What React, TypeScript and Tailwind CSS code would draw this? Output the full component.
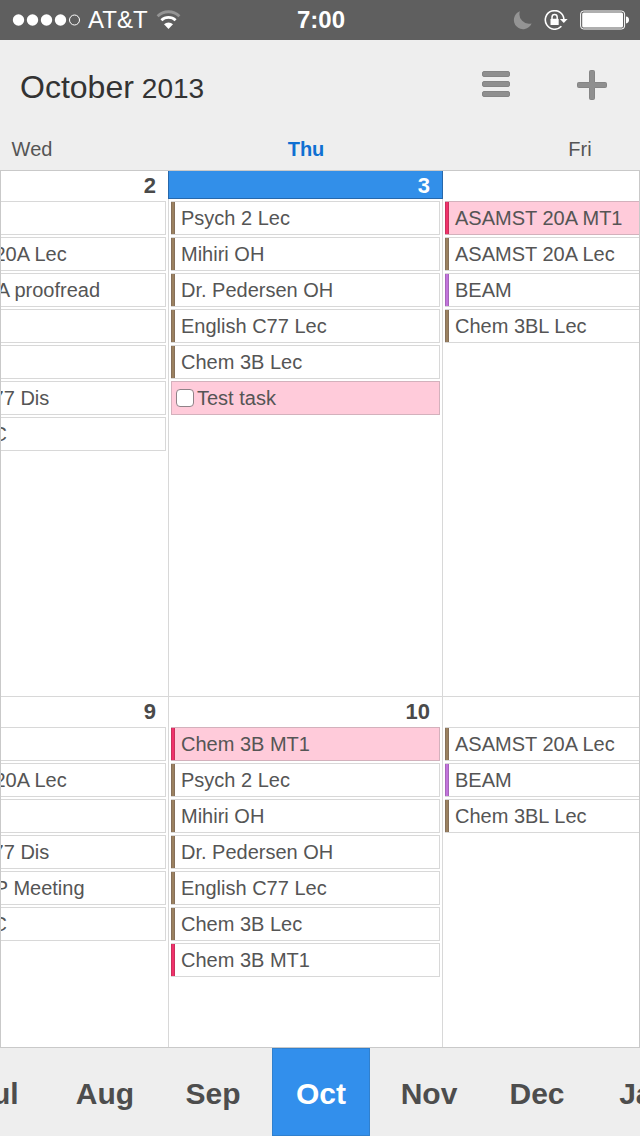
import { clsx } from "clsx";

type EventItem = {
  title?: string;
  color?: "brown" | "pink" | "purple";
  filled?: boolean;
  task?: boolean;
};

type Day = {
  date?: number;
  today?: boolean;
  events: EventItem[];
};

const DAY_NAMES = ["Wed", "Thu", "Fri"];
const MONTHS = ["Jul", "Aug", "Sep", "Oct", "Nov", "Dec", "Jan"];
const CURRENT_MONTH = "Oct";

// The outer days run past the screen edges, only the middle one is fully visible.
const COLUMNS = "grid grid-cols-[168fr_274fr_198fr]";
const ALIGN = ["justify-end", "justify-center", "justify-start"];

const FIRST_WEEK: Day[] = [
  {
    date: 2,
    events: [
      {},
      { title: "ASAMST 20A Lec" },
      { title: "Writing 20A proofread" },
      {},
      {},
      { title: "English C77 Dis" },
      { title: "English RC" },
    ],
  },
  {
    date: 3,
    today: true,
    events: [
      { title: "Psych 2 Lec" },
      { title: "Mihiri OH" },
      { title: "Dr. Pedersen OH" },
      { title: "English C77 Lec" },
      { title: "Chem 3B Lec" },
      { title: "Test task", task: true, filled: true },
    ],
  },
  {
    events: [
      { title: "ASAMST 20A MT1", color: "pink", filled: true },
      { title: "ASAMST 20A Lec" },
      { title: "BEAM", color: "purple" },
      { title: "Chem 3BL Lec" },
    ],
  },
];

const SECOND_WEEK: Day[] = [
  {
    date: 9,
    events: [
      {},
      { title: "ASAMST 20A Lec" },
      {},
      { title: "English C77 Dis" },
      { title: "Student VP Meeting" },
      { title: "English RC" },
    ],
  },
  {
    date: 10,
    events: [
      { title: "Chem 3B MT1", color: "pink", filled: true },
      { title: "Psych 2 Lec" },
      { title: "Mihiri OH" },
      { title: "Dr. Pedersen OH" },
      { title: "English C77 Lec" },
      { title: "Chem 3B Lec" },
      { title: "Chem 3B MT1", color: "pink" },
    ],
  },
  {
    events: [
      { title: "ASAMST 20A Lec" },
      { title: "BEAM", color: "purple" },
      { title: "Chem 3BL Lec" },
    ],
  },
];

const STRIPES = {
  brown: "border-[#86705a] bg-[#9b8160]",
  pink: "border-[#c92f5c] bg-[#f0326b]",
  purple: "border-[#a565b9] bg-[#c274dc]",
};

function StatusBar() {
  return (
    <div className="grid h-10 grid-cols-[1fr_auto_1fr] items-center bg-[#5f5f5f] pr-2.5 pl-3 text-2xl leading-none text-white">
      <div className="flex items-center gap-2">
        <svg width="68" height="12" viewBox="0 0 68 12" fill="white" aria-hidden>
          <circle cx="6.5" cy="6" r="5.7" />
          <circle cx="20.5" cy="6" r="5.7" />
          <circle cx="34.5" cy="6" r="5.7" />
          <circle cx="48.5" cy="6" r="5.7" />
          <circle cx="62.5" cy="6" r="5" fill="none" stroke="white" />
        </svg>
        <span>AT&amp;T</span>
        <svg width="26" height="20" viewBox="0 0 26 20" fill="none" strokeWidth="2.8" aria-label="Wi-Fi">
          <path d="M1.6 6.2 A15.6 15.6 0 0 1 23.4 6.2" stroke="#949494" />
          <path d="M5.4 10.2 A10.4 10.4 0 0 1 19.6 10.2" stroke="white" />
          <path d="M12.5 19 L8 14.3 A6.6 6.6 0 0 1 17 14.3 Z" fill="white" />
        </svg>
      </div>
      <span className="font-bold">7:00</span>
      <div className="flex items-center justify-end gap-3">
        <svg width="19" height="19" viewBox="0 0 19 19" fill="#949494" aria-label="Do not disturb">
          <path d="M6.9 0.3 A9.2 9.2 0 1 0 18.6 12.4 A9.6 9.6 0 0 1 6.9 0.3 Z" />
        </svg>
        <svg width="24" height="20" viewBox="0 0 24 20" fill="none" stroke="white" aria-label="Rotation lock">
          <path d="M17.4 16.3 A9.3 9.3 0 1 1 19.9 9.2" strokeWidth="1.6" />
          <path d="M15.9 9 H23.6 L19.8 13 Z" fill="white" stroke="none" />
          <rect x="6.5" y="8.8" width="8.2" height="6.2" rx="0.6" fill="white" stroke="none" />
          <path d="M8 9 V7.2 A2.6 2.6 0 0 1 13.2 7.2 V9" strokeWidth="1.5" />
        </svg>
        <svg width="50" height="20" viewBox="0 0 50 20" fill="white" aria-label="Battery full">
          <rect x="0.6" y="1" width="44" height="18" rx="3" fill="none" stroke="white" />
          <rect x="2.2" y="2.6" width="40.8" height="14.8" rx="1.5" />
          <path d="M46 6.6 Q49 7 49 10 Q49 13 46 13.4 Z" />
        </svg>
      </div>
    </div>
  );
}

function Header() {
  return (
    <header>
      <div className="flex h-[90px] items-center pl-5">
        <h1 className="flex grow items-baseline gap-2 pt-1 text-[#333]">
          <span className="text-[32px]">October</span>
          <span className="text-[28px]">2013</span>
        </h1>
        <button type="button" aria-label="Menu" className="flex h-full w-24 items-center justify-center">
          <svg width="28" height="30" viewBox="0 0 28 30" fill="#8f8f8f" stroke="#858585">
            <rect x="0.5" y="1.5" width="27" height="5" rx="1.5" />
            <rect x="0.5" y="11.5" width="27" height="5" rx="1.5" />
            <rect x="0.5" y="21.5" width="27" height="5" rx="1.5" />
          </svg>
        </button>
        <button type="button" aria-label="Add event" className="flex h-full w-24 items-center justify-center">
          <svg width="30" height="30" viewBox="0 0 30 30" fill="#8f8f8f" stroke="#858585">
            <path d="M13.5 0.5 H16.5 Q17.5 0.5 17.5 1.5 V12.5 H28.5 Q29.5 12.5 29.5 13.5 V16.5 Q29.5 17.5 28.5 17.5 H17.5 V28.5 Q17.5 29.5 16.5 29.5 H13.5 Q12.5 29.5 12.5 28.5 V17.5 H1.5 Q0.5 17.5 0.5 16.5 V13.5 Q0.5 12.5 1.5 12.5 H12.5 V1.5 Q12.5 0.5 13.5 0.5 Z" />
          </svg>
        </button>
      </div>
      <div className={clsx(COLUMNS, "h-10 items-center pb-0.5 text-xl leading-none")}>
        {DAY_NAMES.map((name, i) => (
          <div key={name} className={clsx("flex min-w-0 overflow-hidden", ALIGN[i])}>
            <span
              className={clsx(
                "w-[274px] shrink-0 pl-0.5 text-center",
                name === "Thu" ? "font-bold text-[#0f70d2]" : "text-[#555]",
              )}
            >
              {name}
            </span>
          </div>
        ))}
      </div>
    </header>
  );
}

function EventRow({ event }: { event: EventItem }) {
  const box = clsx(
    "flex h-[34px] items-center overflow-hidden border whitespace-nowrap",
    event.filled ? "border-[#d3b1bc] bg-[#ffcbda]" : "border-[#d8d8d8] bg-white",
  );

  if (event.task) {
    return (
      <li>
        <label className={clsx(box, "gap-[3px] pl-1")}>
          <input
            type="checkbox"
            className="size-[18px] appearance-none rounded-sm border border-[#8f8288] bg-white checked:bg-[#328fec]"
          />
          {event.title}
        </label>
      </li>
    );
  }

  return (
    <li className={clsx(box, "border-l-0")}>
      <span className={clsx("-my-px mr-1.5 h-[34px] w-1 shrink-0 border", STRIPES[event.color ?? "brown"])} />
      {event.title}
    </li>
  );
}

function DayCell({ day, align }: { day: Day; align: string }) {
  return (
    <div className={clsx("flex min-w-0", align)}>
      <div className="w-[274px] shrink-0 border-l border-[#d8d8d8]">
        <div
          className={clsx(
            "flex h-7 items-center justify-end pt-0.5 pr-3 text-[22px] leading-none font-bold",
            day.today
              ? "relative -mr-px -ml-px border border-t-0 border-[#2768ab] bg-[#328fe9] text-white"
              : "text-[#4a4a4a]",
          )}
        >
          {day.date}
        </div>
        <ul className="flex flex-col gap-0.5 p-0.5 text-xl leading-none text-[#555]">
          {day.events.map((event, i) => (
            <EventRow key={i} event={event} />
          ))}
        </ul>
      </div>
    </div>
  );
}

function Week({ days, className }: { days: Day[]; className: string }) {
  return (
    <section className={clsx(COLUMNS, "basis-0 overflow-hidden", className)}>
      {days.map((day, i) => (
        <DayCell key={i} day={day} align={ALIGN[i]} />
      ))}
    </section>
  );
}

function MonthBar() {
  return (
    <nav className="flex h-[88px] justify-center gap-2.5 overflow-hidden pl-0.5 text-3xl font-bold text-[#4d4d4d]">
      {MONTHS.map((month) => (
        <button
          key={month}
          type="button"
          className={clsx(
            "w-[98px] shrink-0 border pt-1",
            month === CURRENT_MONTH ? "border-[#3080ce] bg-[#328fec] text-white" : "border-transparent",
          )}
        >
          {month}
        </button>
      ))}
    </nav>
  );
}

export default function App() {
  return (
    <div className="flex min-h-screen flex-col overflow-hidden bg-[#eee] font-['Liberation_Sans',Arial,sans-serif]">
      <StatusBar />
      <Header />
      <main className="relative flex grow flex-col bg-white py-px">
        <Week days={FIRST_WEEK} className="grow-[526] border-b border-[#d8d8d8]" />
        <Week days={SECOND_WEEK} className="grow-[350]" />
        {/* frame lies over the clipped columns */}
        <div className="pointer-events-none absolute inset-0 border border-[#c9c9c9]" />
      </main>
      <MonthBar />
    </div>
  );
}
